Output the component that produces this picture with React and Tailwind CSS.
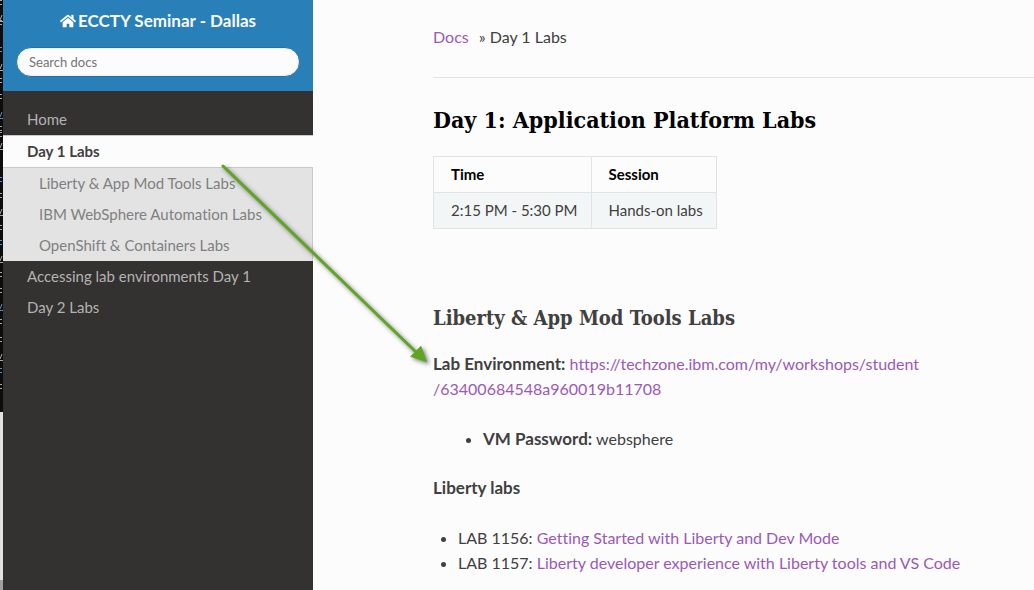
import React from "react";
import { FaHome } from "react-icons/fa";

const glyphRows = [3, 17, 23, 50, 66, 81, 97, 114, 129, 135, 145, 180, 196, 211, 228, 243, 258, 275, 291, 306, 322, 340, 356, 371, 387];

function BackdropEdge() {
  return (
    <div aria-hidden="true" className="flex w-[3px] shrink-0 flex-col bg-[#e2e2e2]">
      <div className="h-[412px] bg-[#0c0c0c]">
        <svg width="3" height="412" viewBox="0 0 3 412" fill="none">
          {glyphRows.map((y, i) => (
            <path
              key={y}
              d={i % 3 === 1 ? `M0 ${y + 3}L2 ${y - 2}M0 ${y + 4.5}H3` : `M0 ${y - 2.5}H2M0 ${y + 1.5}H2`}
              stroke={i % 4 === 3 ? "#5d8fc4" : "#a8a8a8"}
            />
          ))}
        </svg>
      </div>
      <div className="flex-1" />
      <div className="h-[10px] bg-[#a0a0a0]" />
    </div>
  );
}

function NavLink({ children }) {
  return (
    <a href="#" className="block px-6 py-[5px] text-[15px] leading-[21px] text-[#b3b3b3]">
      {children}
    </a>
  );
}

function SubLink({ children }) {
  return (
    <a href="#" className="block py-[5px] pr-6 pl-9 text-[15px] leading-[21px] text-[#808080]">
      {children}
    </a>
  );
}

function Sidebar() {
  return (
    <nav className="w-[310px] shrink-0 bg-[#343131]">
      <div className="bg-[#2980b9] px-[13px] pt-2 pb-[14px]">
        <a href="#" className="flex items-center justify-center gap-[2px] text-[17px] leading-[25px] font-bold text-[#fcfcfc]">
          <FaHome className="size-4" />
          <span>ECCTY Seminar - Dallas</span>
        </a>
        <input
          type="text"
          aria-label="Search docs"
          placeholder="Search docs"
          className="mt-[14px] block h-[30px] w-full rounded-full border border-[#2472a4] bg-[#fcfcfc] px-3 text-[13px] text-[#404040] shadow-[inset_0_0_3px_#ddd] placeholder:text-[#757575]"
        />
      </div>
      <div className="pt-[13px]">
        <NavLink>Home</NavLink>
        <a
          href="#"
          className="block border-y border-[#c9c9c9] bg-[#fcfcfc] px-6 py-[5px] text-[15px] leading-[21px] font-bold text-[#404040]"
        >
          Day 1 Labs
        </a>
        <div className="border-r border-[#c9c9c9] bg-[#e3e3e3]">
          <SubLink>Liberty &amp; App Mod Tools Labs</SubLink>
          <SubLink>IBM WebSphere Automation Labs</SubLink>
          <SubLink>OpenShift &amp; Containers Labs</SubLink>
        </div>
        <NavLink>Accessing lab environments Day 1</NavLink>
        <NavLink>Day 2 Labs</NavLink>
      </div>
    </nav>
  );
}

function Arrow() {
  return (
    <svg
      aria-hidden="true"
      className="pointer-events-none absolute top-[160px] left-[215px] drop-shadow-[2px_2px_2px_rgba(0,0,0,0.5)]"
      width="225"
      height="215"
      viewBox="0 0 225 215"
    >
      <path d="M8 6L202 193" stroke="#5fa423" strokeWidth="3" strokeLinecap="round" />
      <path d="M212 202L206 186L195.500 196.500Z" fill="#5fa423" stroke="#5fa423" strokeWidth="0.5" />
    </svg>
  );
}

const link = "text-[#9b59b6]";
const cell = "border border-[#e1e4e5] py-2 pr-[13px] pl-[17px]";

export default function App() {
  return (
    <div className="relative flex min-h-screen overflow-hidden bg-[#fcfcfc] font-['Lato',sans-serif] text-[16px] leading-[25px] text-[#404040] [font-variant-ligatures:none]">
      <BackdropEdge />
      <Sidebar />
      <main className="min-w-0 flex-1 pl-[120px]">
        <div className="border-b border-[#e1e4e5] pt-6 pb-7">
          <a href="#" className={link}>Docs</a>
          <span className="pl-[10px]">» Day 1 Labs</span>
        </div>
        <h1 className="mt-6 font-['Roboto_Slab','DejaVu_Serif_Condensed','DejaVu_Serif',serif] text-[23px] leading-9 font-bold text-black">
          Day 1: Application Platform Labs
        </h1>
        <table className="mt-[18px] border-collapse text-[15px] leading-[19px]">
          <thead>
            <tr className="text-left text-black">
              <th className={cell}>Time</th>
              <th className={cell}>Session</th>
            </tr>
          </thead>
          <tbody>
            <tr className="bg-[#f3f6f6]">
              <td className={cell}>2:15 PM - 5:30 PM</td>
              <td className={cell}>Hands-on labs</td>
            </tr>
          </tbody>
        </table>
        <h2 className="mt-[73px] font-['Roboto_Slab','DejaVu_Serif_Condensed','DejaVu_Serif',serif] text-[20px] leading-8 font-bold">
          Liberty &amp; App Mod Tools Labs
        </h2>
        <p className="mt-[17px]">
          <strong className="text-[17px]">Lab Environment:</strong>{" "}
          <a href="#" className={link}>
            https://techzone.ibm.com/my/workshops/student
            <br />
            /63400684548a960019b11708
          </a>
        </p>
        <ul className="mt-[25px] list-disc pl-[50px]">
          <li><strong className="text-[17px]">VM Password:</strong> websphere</li>
        </ul>
        <p className="mt-6 text-[17px] font-bold">Liberty labs</p>
        <ul className="mt-[25px] list-disc pl-[25px]">
          <li>LAB 1156: <a href="#" className={link}>Getting Started with Liberty and Dev Mode</a></li>
          <li>LAB 1157: <a href="#" className={link}>Liberty developer experience with Liberty tools and VS Code</a></li>
        </ul>
      </main>
      <Arrow />
    </div>
  );
}
